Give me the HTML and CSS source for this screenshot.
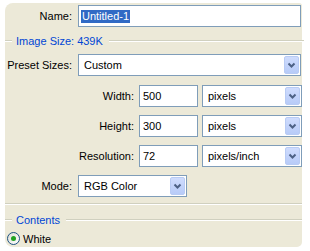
FILE: index.html
```html
<!DOCTYPE html>
<html lang="en">
<head>
  <meta charset="UTF-8">
  <title>New Document</title>
  <link rel="stylesheet" href="styles.css">
</head>
<body>

  <div class="panel">
    <div class="row">
      <span class="label">Name:</span>
      <div class="textbox wide"><span class="sel">Untitled-1</span></div>
    </div>

    <div class="legend top-legend"><span>Image Size: 439K</span></div>

    <div class="row preset">
      <span class="label">Preset Sizes:</span>
      <div class="select wide"><span class="val">Custom</span><span class="drop"><svg width="9" height="6" viewBox="0 0 9 6"><path d="M1.5 1.5 L4.5 4.5 L7.5 1.5" fill="none" stroke="#4d6185" stroke-width="2"/></svg></span></div>
    </div>

    <div class="row dim first">
      <span class="label long">Width:</span>
      <div class="textbox num">500</div>
      <div class="select unit"><span class="val">pixels</span><span class="drop"><svg width="9" height="6" viewBox="0 0 9 6"><path d="M1.5 1.5 L4.5 4.5 L7.5 1.5" fill="none" stroke="#4d6185" stroke-width="2"/></svg></span></div>
    </div>

    <div class="row dim">
      <span class="label long">Height:</span>
      <div class="textbox num">300</div>
      <div class="select unit"><span class="val">pixels</span><span class="drop"><svg width="9" height="6" viewBox="0 0 9 6"><path d="M1.5 1.5 L4.5 4.5 L7.5 1.5" fill="none" stroke="#4d6185" stroke-width="2"/></svg></span></div>
    </div>

    <div class="row dim">
      <span class="label long">Resolution:</span>
      <div class="textbox num">72</div>
      <div class="select unit"><span class="val">pixels/inch</span><span class="drop"><svg width="9" height="6" viewBox="0 0 9 6"><path d="M1.5 1.5 L4.5 4.5 L7.5 1.5" fill="none" stroke="#4d6185" stroke-width="2"/></svg></span></div>
    </div>

    <div class="row dim">
      <span class="label">Mode:</span>
      <div class="select mode"><span class="val">RGB Color</span><span class="drop"><svg width="9" height="6" viewBox="0 0 9 6"><path d="M1.5 1.5 L4.5 4.5 L7.5 1.5" fill="none" stroke="#4d6185" stroke-width="2"/></svg></span></div>
    </div>

    <div class="separator"></div>

    <div class="legend contents-legend"><span>Contents</span></div>

    <label class="radio-row"><span class="radio"><span class="dot"></span></span>White</label>
  </div>

</body>
</html>
```

FILE: styles.css
```css
body { margin: 0; background: #fff; font-family: "Liberation Sans", Arial, sans-serif; font-size: 11px; color: #000; }
.panel { margin: 3px 0 0 5px; width: 297px; height: 244px; padding-top: 2px; box-sizing: border-box; background: #ece9d8; border-radius: 8px 3px 5px 8px; }

.row { display: flex; align-items: center; height: 22px; }
.label { width: 67px; padding-right: 6px; text-align: right; white-space: nowrap; }
.label.long { width: 129px; padding-right: 5px; }

.textbox { box-sizing: border-box; height: 22px; border: 1px solid #7f9db9; background: #fff; display: flex; align-items: center; padding-left: 3px; }
.textbox.wide { width: 223px; padding-left: 2px; }
.textbox.num { width: 59px; }
.sel { background: #316ac5; color: #fff; padding: 0 1px; line-height: 13px; }

.select { box-sizing: border-box; height: 22px; border: 1px solid #7f9db9; background: #fff; display: flex; align-items: center; padding: 1px; }
.select.wide { width: 223px; }
.select.unit { width: 100px; margin-left: 4px; }
.select.mode { width: 109px; }
.select .val { flex: 1; padding-left: 4px; }
.drop { width: 15px; height: 18px; box-sizing: border-box; border: 1px solid #b8cbf4; border-radius: 2px; background: linear-gradient(#cfdcfd, #b7cbf8); display: flex; align-items: center; justify-content: center; }

.legend { display: flex; align-items: center; height: 12px; color: #0046d5; }
.legend::before, .legend::after { content: ""; height: 0; border-top: 1px solid #d0d0bf; border-bottom: 1px solid #fff; }
.legend::before { width: 7px; margin-right: 4px; }
.legend::after { flex: 1; margin-left: 6px; }
.top-legend { margin: 8px -2px 0 0; }
.preset { margin-top: 7px; }
.dim { margin-top: 8px; }
.dim.first { margin-top: 9px; }

.separator { margin-top: 6px; border-top: 1px solid #d0d0bf; border-bottom: 1px solid #fff; }
.contents-legend { margin-top: 9px; }

.radio-row { display: flex; align-items: center; gap: 3px; margin: 6px 0 0 2px; height: 13px; }
.radio { width: 13px; height: 13px; box-sizing: border-box; border: 1px solid #1c5180; border-radius: 50%; background: linear-gradient(135deg, #dcdcd5, #fff); display: flex; align-items: center; justify-content: center; }
.dot { width: 5px; height: 5px; border-radius: 50%; background: #21a121; }
```
